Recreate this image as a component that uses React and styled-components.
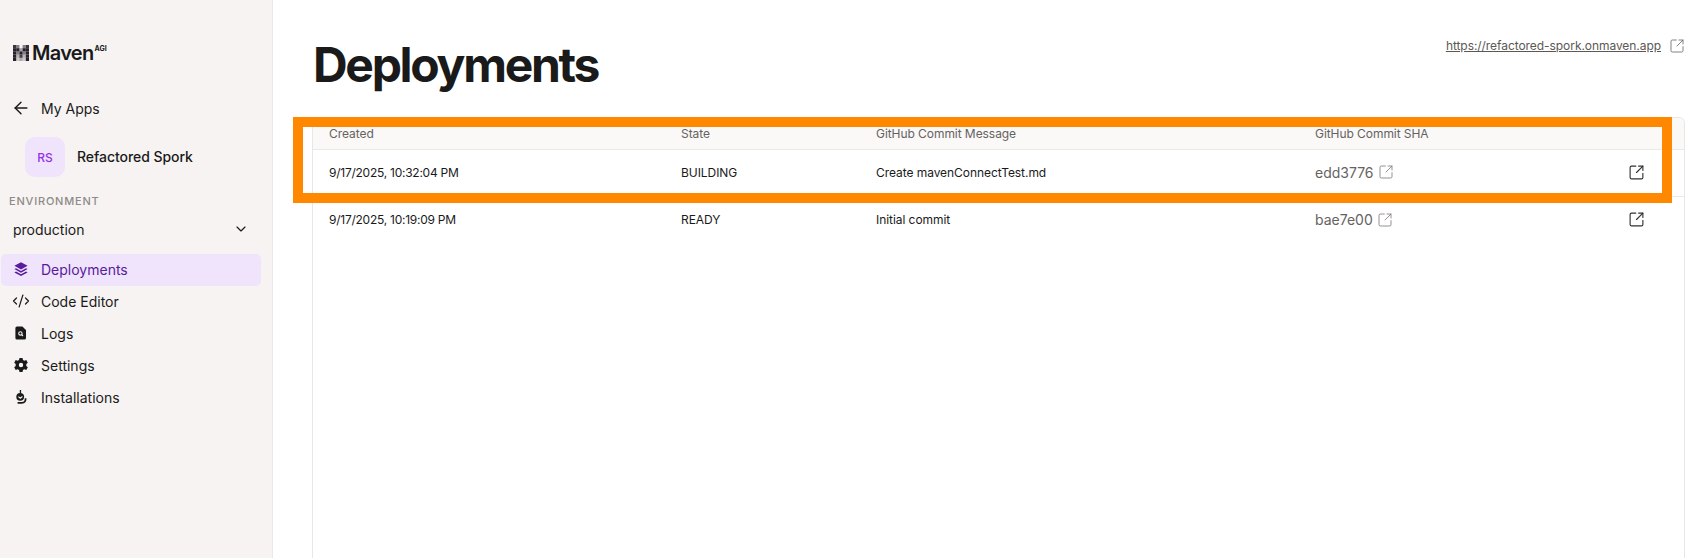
import React from 'react'
import styled, { createGlobalStyle } from 'styled-components'
import { ArrowLeft, ChevronDown, CodeXml, SquareArrowOutUpRight } from 'lucide-react'

const GlobalStyle = createGlobalStyle`
    * {
        box-sizing: border-box;
    }

    html, body {
        margin: 0;
        height: 100%;
        overflow: hidden;
        background: #ffffff;
    }

    body {
        font-family: Inter, "Liberation Sans", sans-serif;
        color: #1a1a1a;
    }

    svg {
        flex: none;
    }
`

const Page = styled.div`
    display: flex;
    height: 558px;
    position: relative;
`

const Sidebar = styled.aside`
    width: 273px;
    flex-shrink: 0;
    background: #f6f3f2;
    border-right: 1px solid #ebe8e6;
    padding: 44px 11px 0 1px;
    display: flex;
    flex-direction: column;
`

const Logo = styled.div`
    display: flex;
    align-items: center;
    gap: 3px;
    height: 20px;
    padding: 0 0 2px 12px;
    margin-bottom: 35px;
`

const LogoWord = styled.span`
    font-size: 20px;
    font-weight: 600;
    letter-spacing: -0.7px;
    line-height: 20px;
    color: #1a1a1a;
`

const LogoSup = styled.span`
    font-size: 7px;
    font-weight: 700;
    line-height: 7px;
    align-self: flex-start;
    margin-left: -2px;
    margin-top: 1px;
`

const BackLink = styled.div`
    display: flex;
    align-items: center;
    gap: 10px;
    height: 20px;
    padding: 0 0 2px 10px;
    font-size: 14px;
    color: #1a1a1a;
    margin-bottom: 18px;
`

const AppRow = styled.div`
    display: flex;
    align-items: center;
    gap: 12px;
    padding-left: 24px;
    margin-bottom: 18px;
`

const Avatar = styled.div`
    width: 40px;
    height: 40px;
    border-radius: 10px;
    background: #f0e3fc;
    color: #9333ea;
    font-size: 12px;
    font-weight: 500;
    display: flex;
    align-items: center;
    justify-content: center;
`

const AppName = styled.span`
    font-size: 14px;
    font-weight: 500;
    letter-spacing: -0.05px;
    padding-bottom: 2px;
`

const SectionLabel = styled.div`
    padding-left: 8px;
    font-size: 11px;
    font-weight: 500;
    letter-spacing: 0.8px;
    line-height: 12px;
    color: #8f8a88;
    margin-bottom: 11px;
`

const EnvSelect = styled.div`
    display: flex;
    align-items: center;
    justify-content: space-between;
    height: 24px;
    padding: 0 12px 2px;
    font-size: 14px;
    color: #1a1a1a;
    margin-bottom: 12px;
`

const Nav = styled.nav`
    display: flex;
    flex-direction: column;
`

const NavItem = styled.div`
    display: flex;
    align-items: center;
    gap: 12px;
    height: 32px;
    padding: 0 0 2px 12px;
    border-radius: 5px;
    font-size: 14px;
    background: ${(p) => (p.$active ? '#f0e3fc' : 'transparent')};
    color: ${(p) => (p.$active ? '#581c9c' : '#1a1a1a')};
`

const NavIcon = styled.span`
    width: 16px;
    height: 16px;
    display: flex;
    align-items: center;
    justify-content: center;
`

const Main = styled.main`
    flex: 1;
    min-width: 0;
    padding: 0 23px 0 39px;
    display: flex;
    flex-direction: column;
`

const Header = styled.header`
    height: 117px;
    display: flex;
    justify-content: space-between;
    align-items: flex-start;
`

const Title = styled.h1`
    margin: 36px 0 0 1px;
    font-size: 48px;
    font-weight: 700;
    line-height: 58px;
    letter-spacing: -2.3px;
    color: #1a1a1a;
`

const SiteLink = styled.div`
    display: flex;
    align-items: center;
    gap: 8px;
    margin-top: 37px;
    font-size: 12px;
    line-height: 18px;
    letter-spacing: -0.06px;
    color: #5c5855;
`

const SiteUrl = styled.span`
    text-decoration: underline;
`

const TableCard = styled.div`
    flex: 1;
    border: 1px solid #e9e7e5;
    border-bottom: none;
    border-radius: 6px 6px 0 0;
    overflow: hidden;
`

const Row = styled.div`
    display: grid;
    grid-template-columns: 352px 195px 439px 313px 1fr;
    align-items: center;
    padding: ${(p) => (p.$head ? '0 0 0 16px' : '0 0 2px 16px')};
    height: ${(p) => (p.$head ? '32px' : '47px')};
    background: ${(p) => (p.$head ? '#faf9f7' : '#ffffff')};
    border-bottom: ${(p) => (p.$last ? 'none' : '1px solid #ebe9e7')};
    font-size: 12px;
    letter-spacing: -0.06px;
    color: ${(p) => (p.$head ? '#66625f' : '#1a1a1a')};
`

const CreatedCell = styled.span`
    letter-spacing: -0.25px;
`

const Sha = styled.span`
    display: flex;
    align-items: center;
    gap: 4px;
    font-size: 14px;
    letter-spacing: 0;
    color: #66625f;
`

const RowAction = styled.span`
    display: flex;
    color: #333130;
`

const Highlight = styled.div`
    position: absolute;
    left: 293px;
    top: 117px;
    width: 1379px;
    height: 86px;
    border: 10px solid #ff8800;
    pointer-events: none;
`

const LayersIcon = () => (
    <svg width="16" height="16" viewBox="0 0 16 16" fill="currentColor">
        <path d="M8 1.2 14.6 4.8 8 8.4 1.4 4.8Z" />
        <path d="M3 7.2 8 9.9 13 7.2 14.6 8.1 8 11.7 1.4 8.1Z" />
        <path d="M3 10.5 8 13.2 13 10.5 14.6 11.4 8 15 1.4 11.4Z" />
    </svg>
)

const LogsIcon = () => (
    <svg width="16" height="16" viewBox="0 0 16 16">
        <path d="M4 1.5h5.4L13 5.1V13a1.6 1.6 0 0 1-1.6 1.6H4A1.6 1.6 0 0 1 2.4 13V3.1A1.6 1.6 0 0 1 4 1.5Z" fill="#1a1a1a" />
        <circle cx="7.4" cy="8.4" r="1.7" fill="none" stroke="#f6f3f2" strokeWidth="1.1" />
        <path d="M8.7 9.7 10 11" stroke="#f6f3f2" strokeWidth="1.1" />
    </svg>
)

const GearIcon = () => (
    <svg width="16" height="16" viewBox="0 0 16 16">
        <path
            fill="#1a1a1a"
            fillRule="evenodd"
            d="M6.5 1h3l.5 2 1.3.7 2-.6 1.5 2.6-1.5 1.4v1.8l1.5 1.4-1.5 2.6-2-.6-1.3.7-.5 2h-3l-.5-2-1.3-.7-2 .6-1.5-2.6 1.5-1.4V7.1L1.2 5.7l1.5-2.6 2 .6L6 3ZM8 5.8a2.2 2.2 0 1 0 0 4.4 2.2 2.2 0 0 0 0-4.4Z"
        />
    </svg>
)

const InstallIcon = () => (
    <svg width="16" height="16" viewBox="0 0 16 16">
        <path d="M6.8 1h1.3v3.2H6.8Z" fill="#1a1a1a" />
        <circle cx="7.2" cy="7.8" r="3.9" fill="#1a1a1a" />
        <path d="M5.4 7.6 7.3 9.2 9.4 7.6" fill="none" stroke="#f6f3f2" strokeWidth="1.2" />
        <path d="M12.4 9.2c.8 2.6-.9 4.6-3.6 4.6H4.6" fill="none" stroke="#1a1a1a" strokeWidth="1.8" />
    </svg>
)

// pixel-block M
const logoCells = [
    [0, 0, 0.9], [1, 0, 0.55], [3, 0, 0.55], [4, 0, 0.9],
    [0, 1, 1], [1, 1, 1], [2, 1, 0.4], [3, 1, 1], [4, 1, 1],
    [0, 2, 1], [1, 2, 0.55], [2, 2, 1], [3, 2, 0.55], [4, 2, 1],
    [0, 3, 1], [1, 3, 0.3], [2, 3, 0.85], [3, 3, 0.3], [4, 3, 1],
    [0, 4, 1], [1, 4, 0.2], [2, 4, 0.35], [3, 4, 0.2], [4, 4, 1],
]

const LogoMark = () => (
    <svg width="16" height="16" viewBox="0 0 5 5">
        {logoCells.map(([x, y, o]) => (
            <rect key={`${x}-${y}`} x={x} y={y} width="1" height="1" fill="#26202c" opacity={o} />
        ))}
    </svg>
)

const navItems = [
    { label: 'Deployments', icon: <LayersIcon />, active: true },
    { label: 'Code Editor', icon: <CodeXml size={18} strokeWidth={1.6} /> },
    { label: 'Logs', icon: <LogsIcon /> },
    { label: 'Settings', icon: <GearIcon /> },
    { label: 'Installations', icon: <InstallIcon /> },
]

const deployments = [
    { created: '9/17/2025, 10:32:04 PM', state: 'BUILDING', message: 'Create mavenConnectTest.md', sha: 'edd3776' },
    { created: '9/17/2025, 10:19:09 PM', state: 'READY', message: 'Initial commit', sha: 'bae7e00' },
]

const App = () => {
    return (
        <Page>
            <GlobalStyle />
            <Sidebar>
                <Logo>
                    <LogoMark />
                    <LogoWord>Maven</LogoWord>
                    <LogoSup>AGI</LogoSup>
                </Logo>
                <BackLink>
                    <ArrowLeft size={20} strokeWidth={1.7} />
                    My Apps
                </BackLink>
                <AppRow>
                    <Avatar>RS</Avatar>
                    <AppName>Refactored Spork</AppName>
                </AppRow>
                <SectionLabel>ENVIRONMENT</SectionLabel>
                <EnvSelect>
                    production
                    <ChevronDown size={16} strokeWidth={1.75} />
                </EnvSelect>
                <Nav>
                    {navItems.map((item) => (
                        <NavItem key={item.label} $active={item.active}>
                            <NavIcon>{item.icon}</NavIcon>
                            {item.label}
                        </NavItem>
                    ))}
                </Nav>
            </Sidebar>
            <Main>
                <Header>
                    <Title>Deployments</Title>
                    <SiteLink>
                        <SiteUrl>https://refactored-spork.onmaven.app</SiteUrl>
                        <SquareArrowOutUpRight size={16} strokeWidth={1.2} color="#66625f" />
                    </SiteLink>
                </Header>
                <TableCard>
                    <Row $head>
                        <span>Created</span>
                        <span>State</span>
                        <span>GitHub Commit Message</span>
                        <span>GitHub Commit SHA</span>
                        <span />
                    </Row>
                    {deployments.map((d, i) => (
                        <Row key={d.sha} $last={i === deployments.length - 1}>
                            <CreatedCell>{d.created}</CreatedCell>
                            <span>{d.state}</span>
                            <span>{d.message}</span>
                            <Sha>
                                {d.sha}
                                <SquareArrowOutUpRight size={16} strokeWidth={1.2} color="#7a7672" />
                            </Sha>
                            <RowAction>
                                <SquareArrowOutUpRight size={17} strokeWidth={1.6} />
                            </RowAction>
                        </Row>
                    ))}
                </TableCard>
            </Main>
            <Highlight />
        </Page>
    )
}

export default App
